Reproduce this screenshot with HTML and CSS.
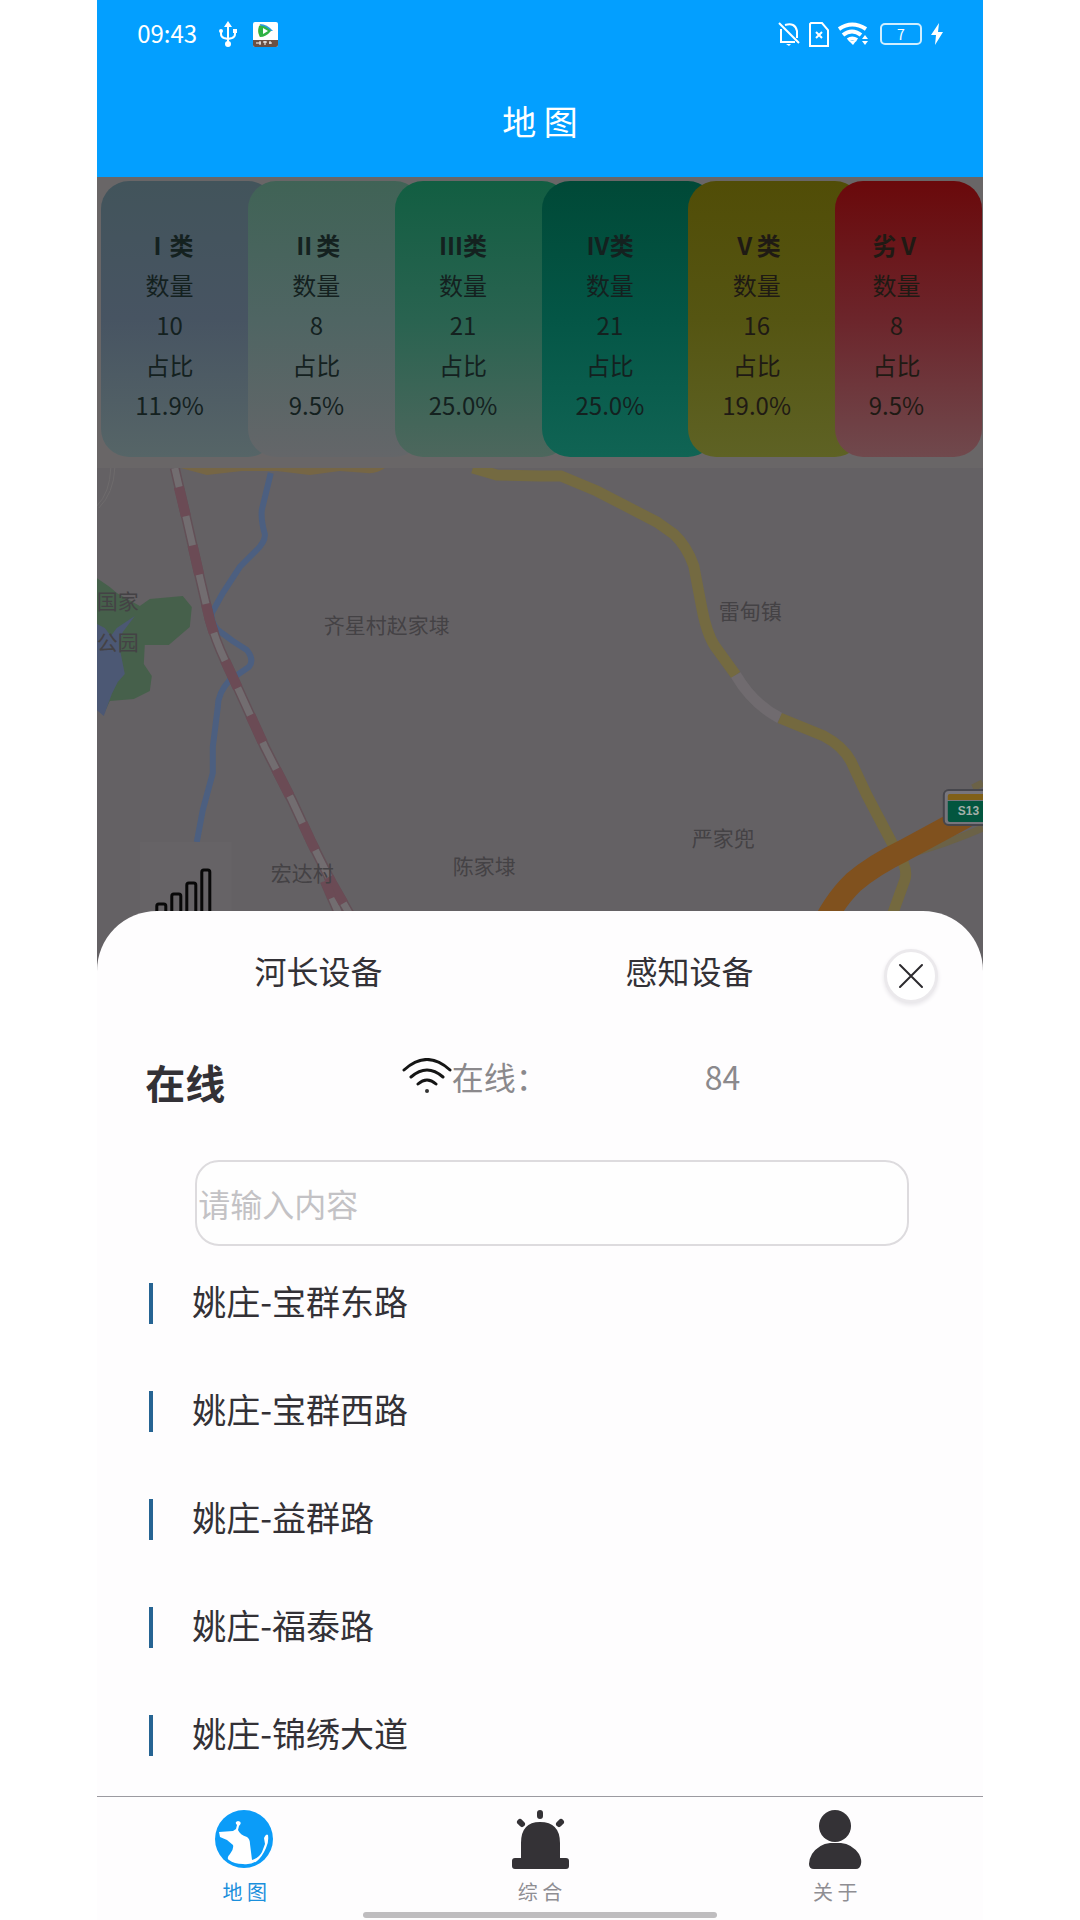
FILE: index.html
```html
<!DOCTYPE html>
<html lang="zh-CN">
  <head>
    <meta charset="UTF-8" />
    <meta name="viewport" content="width=device-width, initial-scale=1.0" />
    <title>地图</title>
    <link rel="stylesheet" href="styles.css">
  </head>
  <body>
    <div class="phone">
      <header class="header">
        <div class="status-bar">
          <span class="time">09:43</span>
          <svg class="icon-usb" width="18" height="26" viewBox="0 0 18 26" fill="none" stroke="#fff" stroke-width="2">
            <path d="M9 5v18M2 10v3q0 3 3 4l4 1M16 10v3q0 3-3 4l-4 1" />
            <path d="M9 0l4 6H5z" fill="#fff" stroke="none" />
            <circle cx="9" cy="23" r="3" fill="#fff" stroke="none" />
            <circle cx="2" cy="10" r="2" fill="#fff" stroke="none" />
            <rect x="14" y="8" width="4" height="4" fill="#fff" stroke="none" />
          </svg>
          <svg width="25" height="25" viewBox="0 0 25 25">
            <rect width="25" height="25" rx="2" fill="#fff" />
            <path d="M7 2Q4 9 7 15l7-6z" fill="#f0a020" />
            <path d="M7 2q7 0 13 7L9 9z" fill="#2a9be0" />
            <path d="M6 4q6-1 12 5-5 6-11 6-3-5-1-11z" fill="#2fb344" />
            <path d="M10 6l5 3-5 3z" fill="#fff" />
            <path d="M0 18h25v5q0 2-2 2H2q-2 0-2-2z" fill="#6b5044" />
            <path d="M3 21h5M7 19v4M10 20h4M12 19v4M16 21h3M17 19v3" stroke="#fff" stroke-width="1" />
          </svg>
          <div class="status-right">
            <svg width="22" height="24" viewBox="0 0 22 24" fill="none" stroke="#fff" stroke-width="2">
              <path d="M1 1l20 20M3 7v13h14M7 3q10-3 12 6v7" />
              <path d="M8 22h5l-2 2z" fill="#fff" stroke="none" />
            </svg>
            <svg width="20" height="25" viewBox="0 0 20 25" fill="none" stroke="#fff" stroke-width="2">
              <path d="M2 1h11l6 7v16H1V2zM7 10l6 6M13 10l-6 6" />
            </svg>
            <svg width="30" height="24" viewBox="0 0 30 24" fill="none" stroke="#fff" stroke-width="4">
              <path d="M1 7q13-9 27 0M5 13q9-7 18 0M10 18q4-3 9 0" />
              <path d="M11 19h7l-3 4z" fill="#fff" stroke="none" />
              <path d="M24 17l3-4 3 4zM24 19l3 4 3-4z" fill="#fff" stroke="none" />
            </svg>
            <span class="battery">7</span>
            <svg width="12" height="22" viewBox="0 0 12 22"><path d="M8 0L0 12h5L4 22l8-13H7z" fill="#fff" /></svg>
          </div>
        </div>
        <h1 class="title">地 图</h1>
      </header>

      <section class="levels">
        <div class="level level-1"><b>Ⅰ类</b><span>数量</span><span>10</span><span>占比</span><span>11.9%</span></div>
        <div class="level level-2"><b>Ⅱ类</b><span>数量</span><span>8</span><span>占比</span><span>9.5%</span></div>
        <div class="level level-3"><b>Ⅲ类</b><span>数量</span><span>21</span><span>占比</span><span>25.0%</span></div>
        <div class="level level-4"><b>Ⅳ类</b><span>数量</span><span>21</span><span>占比</span><span>25.0%</span></div>
        <div class="level level-5"><b>Ⅴ类</b><span>数量</span><span>16</span><span>占比</span><span>19.0%</span></div>
        <div class="level level-6"><b>劣Ⅴ</b><span>数量</span><span>8</span><span>占比</span><span>9.5%</span></div>
      </section>

      <svg class="map" viewBox="0 0 886 503" preserveAspectRatio="xMidYMin slice">
        <!-- park and lake -->
        <path d="M0 110l13 9 7 6 23 13 10-7 33-3 9 11-2 20-21 18H48l-1 19 8 12-2 15-16 8-24 2-6 13-7-6z" fill="#46604b" />
        <path d="M0 156l8 4 6 8 6-8 18-12-12 16-4 12 6 30-7 8-6 12-8 22-7-6z" fill="#4c5874" />
        <path d="M14 0Q13 25 0 38M18 0Q17 25 2 40" fill="none" stroke="#6e6b6c" stroke-width="1" />
        <!-- river -->
        <path d="M174 5L165 42Q164 52 168 66 169 74 158 84L143 99 126 125 115 145Q114 154 121 162L136 173 150 182Q158 192 152 199L133 212Q121 225 121 239L116 279V305L106 342 100 374" fill="none" stroke="#4c5f80" stroke-width="6" />
        <!-- roads -->
        <path d="M84 0H288Q280 6 270 5L243 3 213 7 180 3 145 3 110 7z" fill="#766645" />
        <path d="M376 0L400 7 443 8H464L500 23 560 54 577 66Q590 78 597 98L605 140Q610 166 618 178L639 207" fill="none" stroke="#746a41" stroke-width="11" />
        <path d="M639 207Q656 236 683 250" fill="none" stroke="#706b6f" stroke-width="11" />
        <path d="M683 250L727 268Q746 278 754 293L770 327 799 382Q812 400 808 412L795 448" fill="none" stroke="#74693f" stroke-width="11" />
        <path d="M806 388Q850 376 886 360M876 320l10-5" fill="none" stroke="#6b6247" stroke-width="7" />
        <path d="M720 470Q735 435 757 414 777 397 808 382L856 356 886 340" fill="none" stroke="#80511e" stroke-width="22" />
        <!-- railway -->
        <path d="M78 0L90 52 102 105 113 152Q119 173 128 192L142 222 168 279 195 332 215 375 235 415 258 455M228 413L246 455" fill="none" stroke="#635057" stroke-width="10" />
        <path d="M78 0L90 52 102 105 113 152Q119 173 128 192L142 222 168 279 195 332 215 375 235 415 258 455M228 413L246 455" fill="none" stroke="#726d70" stroke-width="7" />
        <path d="M82 19L90 52 102 105 113 152Q119 173 128 192L142 222 168 279 195 332 215 375 235 415 258 455" fill="none" stroke="#6b4b55" stroke-width="10" stroke-dasharray="30 30" />
        <path d="M228 413L235 430" stroke="#6b4b55" stroke-width="9" />
        <!-- road sign -->
        <rect x="847" y="322" width="60" height="35" rx="5" fill="#77757c" stroke="#46464c" stroke-width="2" />
        <path d="M851 332v-4q0-2 2-2h40v6z" fill="#806018" />
        <path d="M851 333h40v21h-38q-2 0-2-2z" fill="#03563f" />
        <text class="sign" x="861" y="347">S13</text>
        <g class="places">
          <text x="0" y="141">国家</text>
          <text x="0" y="182">公园</text>
          <text x="227" y="165">齐星村赵家埭</text>
          <text x="622" y="151">雷甸镇</text>
          <text x="595" y="378">严家兜</text>
          <text x="174" y="413">宏达村</text>
          <text x="356" y="406">陈家埭</text>
        </g>
        <!-- signal button -->
        <rect x="43" y="374" width="92" height="92" fill="#666366" />
        <path d="M60 460V438q0-2 2-2h5q2 0 2 2v22M75 460V428q0-2 2-2h5q2 0 2 2v32M90 460V417q0-2 2-2h5q2 0 2 2v43M105 460V404q0-2 2-2h4q2 0 2 2v56" fill="none" stroke="#080808" stroke-width="3" />
      </svg>

      <main class="sheet">
        <div class="sheet-head">
          <button class="device-tab" type="button">河长设备</button>
          <button class="device-tab" type="button">感知设备</button>
          <button class="close-btn" type="button" aria-label="关闭">
            <svg width="26" height="26" viewBox="0 0 26 26"><path d="M2 2l22 22M24 2L2 24" stroke="#2c2a2e" stroke-width="2" stroke-linecap="round" /></svg>
          </button>
        </div>

        <div class="online">
          <h2>在线</h2>
          <div class="online-label">
            <svg width="50" height="36" viewBox="0 0 50 36" fill="none" stroke="#151515" stroke-width="3" stroke-linecap="round">
              <path d="M2 12Q25-9 48 12M9 19Q25 5 41 19M16 26Q25 18 34 26" />
              <circle cx="25" cy="33" r="2" fill="#333" stroke="none" />
            </svg>
            <span>在线：</span>
          </div>
          <span class="online-count">84</span>
        </div>

        <input class="search" type="text" aria-label="搜索设备" placeholder="请输入内容" />

        <ul class="device-list">
          <li>姚庄-宝群东路</li>
          <li>姚庄-宝群西路</li>
          <li>姚庄-益群路</li>
          <li>姚庄-福泰路</li>
          <li>姚庄-锦绣大道</li>
        </ul>
      </main>

      <footer class="footer">
        <nav class="tabs">
          <a class="tab active" href="#">
            <svg width="59" height="59" viewBox="0 0 59 59">
              <circle cx="29" cy="29" r="29" fill="#0b9cf8" />
              <path d="M4 22l14-1 3-2 1-4q-3-3 1-4 5 1 1 5l-1 4q2 5 9 7 3 2 3 7l2 16q7-2 10-8l3-8-1-6q2-5 4-3 1 7-2 13-4 9-9 13-6 4-14 3-9 0-14-4-3-2 1-6 4-5 3-9L12 30l-7-3z" fill="#fff" />
            </svg>
            <span>地 图</span>
          </a>
          <a class="tab" href="#">
            <svg width="59" height="59" viewBox="0 0 59 59" fill="#343236">
              <path d="M10 48V33Q10 12 29 12 49 12 49 33V48h6q3 0 3 3v5q0 3-3 3H4q-3 0-3-3v-5q0-3 3-3z" />
              <path d="M29 3v3M9 12l2 2M50 12l-2 2" stroke="#343236" stroke-width="6" stroke-linecap="round" />
            </svg>
            <span>综 合</span>
          </a>
          <a class="tab" href="#">
            <svg width="59" height="59" viewBox="0 0 59 59" fill="#343236">
              <circle cx="29" cy="16" r="16" />
              <path d="M24 33h11q11 1 18 11 3 6 2 10-1 5-5 5H8q-5 0-5-5 0-5 3-10 7-10 18-11z" />
            </svg>
            <span>关 于</span>
          </a>
        </nav>
        <div class="home-bar"></div>
      </footer>
    </div>
  </body>
</html>
```

FILE: styles.css
```css
* {
  box-sizing: border-box;
}

body {
  margin: 0;
  background-color: #fff;
  font-family: "Noto Sans CJK SC", sans-serif;
  color: #333136;
}

h1,
h2,
ul {
  margin: 0;
  padding: 0;
}

button,
input {
  font-family: inherit;
  color: inherit;
}

.phone {
  display: flex;
  flex-direction: column;
  width: 82%;
  min-height: 100vh;
  margin: 0 auto;
  background-color: #646164;
}

/* header */
.header {
  padding-bottom: 3px;
  background-color: #039fff;
  color: #fff;
}

.status-bar {
  display: flex;
  align-items: center;
  height: 68px;
  padding: 0 40px;
}

.time {
  padding-bottom: 4px;
  font-size: 24px;
}

.icon-usb {
  margin: 0 16px 0 22px;
}

.status-right {
  display: flex;
  align-items: center;
  gap: 9px;
  margin-left: auto;
}

.battery {
  width: 42px;
  height: 22px;
  margin-left: 3px;
  border: 2px solid #cfeeff;
  border-radius: 5px;
  font-size: 14px;
  line-height: 18px;
  text-align: center;
}

.title {
  font-size: 34px;
  font-weight: 400;
  line-height: 106px;
  text-align: center;
}

/* water quality levels */
.levels {
  display: grid;
  grid-template-columns: repeat(6, 1fr);
  padding: 4px 1px 11px 4px;
  background-color: #696667;
}

/* each card runs on under the rounded corner of the next one */
.level {
  display: flex;
  flex-direction: column;
  align-items: center;
  height: 276px;
  margin-right: -28px;
  padding: 44px 38px 0 0;
  border-radius: 28px;
  color: #14211f;
  font-size: 24px;
  line-height: 40px;
}

.level-1 {
  background: linear-gradient(#42545b, #475462 50%, #566567);
}

.level-2 {
  background: linear-gradient(#406356, #4f6563 50%, #646669);
}

.level-3 {
  background: linear-gradient(#125e42, #296350 50%, #4d675d);
}

.level-4 {
  background: linear-gradient(#004937, #045646 50%, #106454);
}

.level-5 {
  background: linear-gradient(#514d07, #555512 50%, #5e6224);
}

.level-6 {
  margin-right: 0;
  padding-right: 24px;
  background: linear-gradient(#6a090b, #6c252b 50%, #70494d);
}

.level-5,
.level-6 {
  color: #1f1a14;
}

/* map */
.map {
  display: block;
  flex: 1 1 480px;
  width: 100%;
  min-height: 0;
}

.places {
  fill: #444245;
  font-size: 21px;
}

.sign {
  fill: #a3b0aa;
  font-family: "Liberation Sans", sans-serif;
  font-size: 12px;
  font-weight: 700;
}

/* bottom sheet */
.sheet {
  margin-top: -60px;
  padding: 38px 0 8px;
  border-radius: 60px 60px 0 0;
  background-color: #fefdfe;
  position: relative;
}

.sheet-head {
  display: flex;
  align-items: flex-start;
  padding: 0 45px 0 36px;
}

.device-tab {
  flex: 1;
  padding: 0;
  border: none;
  background: none;
  font-size: 32px;
  line-height: 42px;
}

.close-btn {
  display: flex;
  align-items: center;
  justify-content: center;
  width: 54px;
  height: 54px;
  margin-left: 9px;
  padding: 0;
  border: 3px solid #ebe9ec;
  border-radius: 50%;
  background-color: #fff;
  box-shadow: 0 2px 4px #e6e4e8;
}

.online {
  display: grid;
  grid-template-columns: 4fr 3fr 4fr;
  align-items: start;
  padding: 48px 132px 0 48px;
  color: #8b898c;
  font-size: 32px;
  line-height: 50px;
}

.online h2 {
  color: #333136;
  font-size: 40px;
  line-height: 62px;
}

.online-label {
  display: flex;
  align-items: center;
  white-space: nowrap;
}

.online-label svg {
  flex: none;
}

.online-count {
  text-align: center;
}

.search {
  display: block;
  width: calc(100% - 172px);
  height: 86px;
  margin: 47px 74px 0 98px;
  padding: 0 1px;
  border: 2px solid #dddbde;
  border-radius: 24px;
  background-color: #fefefe;
  font-size: 32px;
}

.search::placeholder {
  color: #c3c2c5;
  opacity: 1;
}

.device-list {
  margin-top: 2px;
  padding: 0 50px 0 52px;
  list-style: none;
}

.device-list li {
  display: flex;
  align-items: center;
  gap: 39px;
  height: 108px;
  padding-bottom: 4px;
  font-size: 34px;
}

.device-list li::before {
  content: "";
  width: 4px;
  height: 41px;
  margin-top: 6px;
  background-color: #266493;
}

/* footer */
.footer {
  padding: 13px 0 2px;
  border-top: 1px solid #9b9aa0;
  background-color: #fefdfe;
}

.tabs {
  display: flex;
}

.tab {
  display: flex;
  flex: 1;
  flex-direction: column;
  align-items: center;
  gap: 7px;
  color: #8f8e93;
  font-size: 20px;
  line-height: 32px;
  text-decoration: none;
}

.tab.active {
  color: #1b8fdc;
}

.home-bar {
  width: 40%;
  height: 6px;
  margin: 4px auto 0;
  border-radius: 3px;
  background-color: #bfbdbf;
}
```
